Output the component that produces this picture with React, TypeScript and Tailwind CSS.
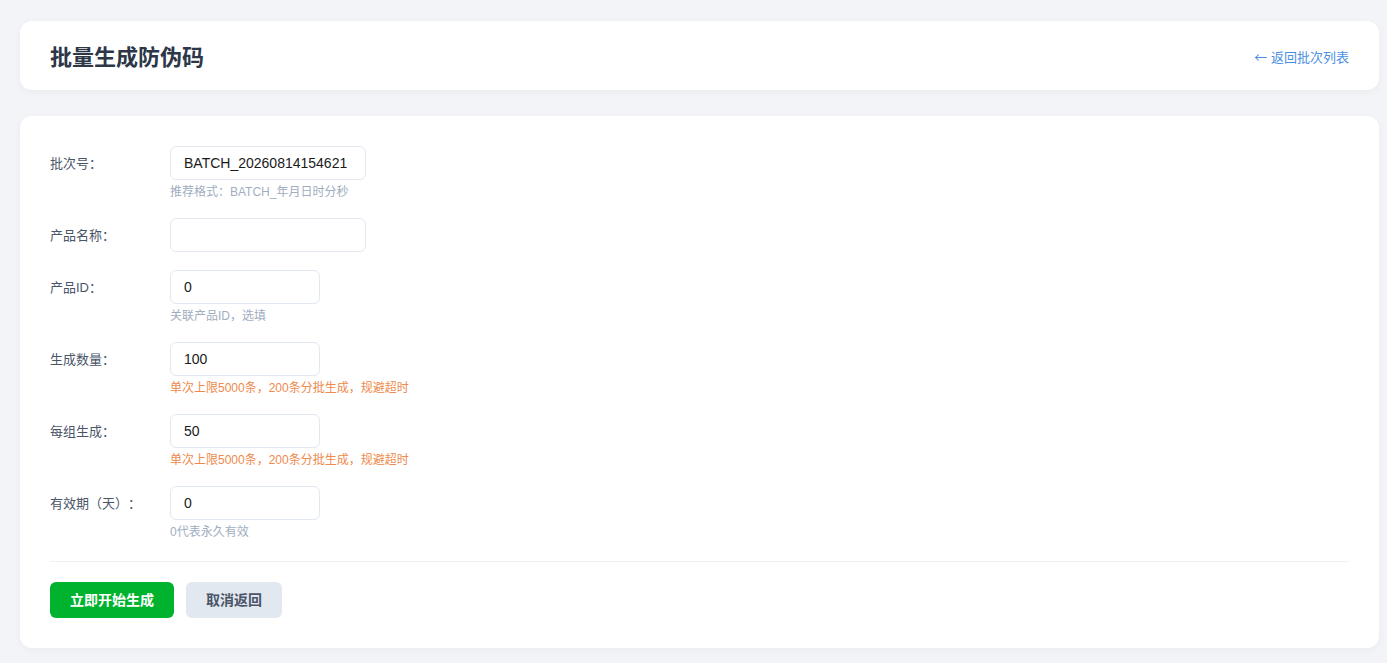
import React, { useState } from 'react';

const font = "font-['Liberation_Sans','Noto_Sans_CJK_SC',sans-serif]";

type Field = {
  key: string;
  label: string;
  value: string;
  wide?: boolean;
  hint?: string;
  warn?: boolean;
};

const fields: Field[] = [
  { key: 'batch', label: '批次号：', value: 'BATCH_20260814154621', wide: true, hint: '推荐格式：BATCH_年月日时分秒' },
  { key: 'name', label: '产品名称：', value: '', wide: true },
  { key: 'pid', label: '产品ID：', value: '0', hint: '关联产品ID，选填' },
  { key: 'count', label: '生成数量：', value: '100', hint: '单次上限5000条，200条分批生成，规避超时', warn: true },
  { key: 'group', label: '每组生成：', value: '50', hint: '单次上限5000条，200条分批生成，规避超时', warn: true },
  { key: 'days', label: '有效期（天）：', value: '0', hint: '0代表永久有效' },
];

export default function App() {
  const [form, setForm] = useState<Record<string, string>>(
    Object.fromEntries(fields.map((f) => [f.key, f.value]))
  );

  return (
    <div className={`min-h-screen bg-[#f3f4f8] pl-5 pr-2 pt-[21px] pb-4 [text-spacing-trim:space-all] ${font}`}>
      <div className="flex h-[69px] items-center justify-between rounded-xl bg-white px-[30px] pt-[4px] shadow-[0_2px_8px_rgba(0,0,0,0.04)]">
        <h1 className="text-[22px] font-bold text-[#2d3748]">批量生成防伪码</h1>
        <a href="#" className="text-[13px] text-[#4a90e2]">
          <span className="font-['Noto_Sans_CJK_SC',sans-serif]">←</span> 返回批次列表
        </a>
      </div>

      <div className="mt-[26px] rounded-xl bg-white px-[30px] pt-[30px] pb-[30px] shadow-[0_2px_8px_rgba(0,0,0,0.04)]">
        <div className="flex flex-col gap-[18px]">
          {fields.map((f) => (
            <div key={f.key} className="flex items-start">
              <label className="flex h-[34px] w-[120px] shrink-0 items-center pt-[2px] text-[13px] text-[#4a5568]">
                {f.label}
              </label>
              <div className="flex flex-col">
                <input
                  value={form[f.key]}
                  onChange={(e) => setForm({ ...form, [f.key]: e.target.value })}
                  className={`h-[34px] rounded-md border border-[#e2e8f0] px-[13px] text-[14px] text-[#1a1a1a] outline-none ${f.wide ? 'w-[196px]' : 'w-[150px]'}`}
                />
                {f.hint && (
                  <p className={`mt-[4px] text-[12px] leading-4 ${f.warn ? 'text-[#ee8a4c]' : 'text-[#a0aec0]'}`}>
                    {f.hint}
                  </p>
                )}
              </div>
            </div>
          ))}
        </div>

        <div className="mt-[21px] border-t border-[#eef1f5] pt-[20px]">
          <div className="flex gap-3">
            <button className="h-9 w-[124px] rounded-md bg-[#00b32e] text-[14px] font-bold text-white">立即开始生成</button>
            <button className="h-9 w-[96px] rounded-md bg-[#e2e8f0] text-[14px] font-bold text-[#4a5568]">取消返回</button>
          </div>
        </div>
      </div>
    </div>
  );
}
